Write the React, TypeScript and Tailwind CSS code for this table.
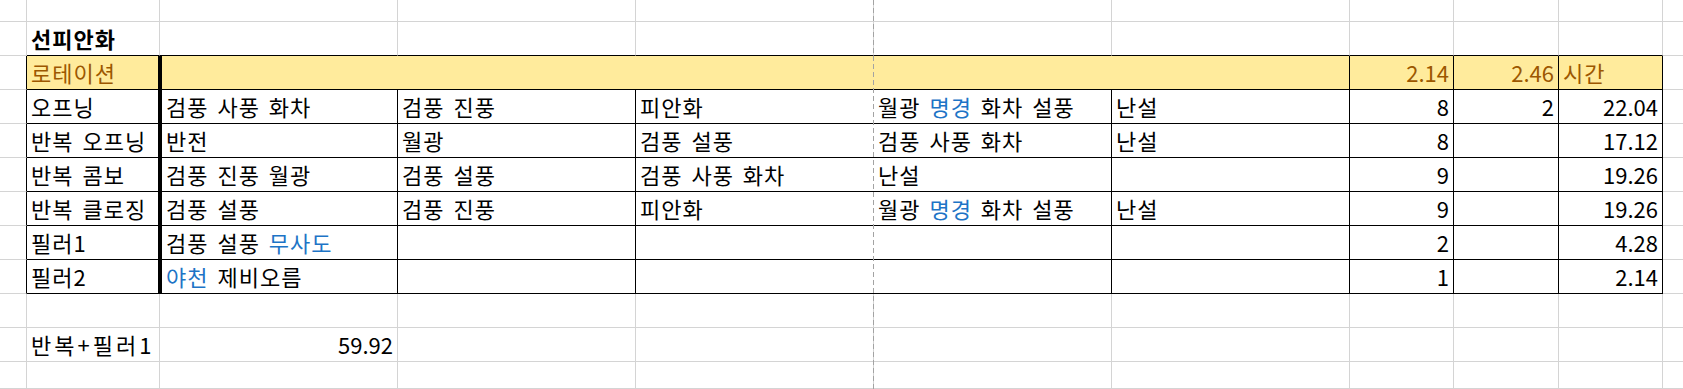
import type { ReactNode } from 'react';

const GRAY = 'border-r border-b border-[#d4d4d4]';
const EDGE = 'border-r border-r-[#d4d4d4] border-b border-b-black';
const LEFT = 'border-r border-r-black border-b border-b-[#d4d4d4]';
const TBL = 'border-r border-b border-black';
const TBL_A = 'border-r-2 border-b border-black';
const TBL_B = 'border-l-2 border-r border-b border-black';
const TBL_D = 'border-b border-black';
const TAIL = 'border-b border-[#d4d4d4]';
const NUM = 'text-right tracking-normal';

function Cell({ children, cls = '' }: { children?: ReactNode; cls?: string }) {
    return (
        <div className={`overflow-visible whitespace-nowrap px-[4px] leading-[33px] ${cls}`}>
            {children}
        </div>
    );
}

function Blue({ children }: { children: ReactNode }) {
    return <span className="text-[#1d74c6]">{children}</span>;
}

type Val = ReactNode;

// one table row: label, five skill columns, two counts, total
function DataRow({ cols }: { cols: Val[] }) {
    const [a, b, c, d, e, f, g, h, i] = cols;
    return (
        <>
            <Cell cls={LEFT} />
            <Cell cls={TBL_A}>{a}</Cell>
            <Cell cls={TBL_B}>{b}</Cell>
            <Cell cls={TBL}>{c}</Cell>
            <Cell cls={TBL_D}>{d}</Cell>
            <Cell cls={TBL}>{e}</Cell>
            <Cell cls={TBL}>{f}</Cell>
            <Cell cls={`${TBL} ${NUM}`}>{g}</Cell>
            <Cell cls={`${TBL} ${NUM}`}>{h}</Cell>
            <Cell cls={`${TBL} ${NUM}`}>{i}</Cell>
            <Cell cls={TAIL} />
        </>
    );
}

function EmptyRow({ edge = false }: { edge?: boolean }) {
    return (
        <>
            <Cell cls={GRAY} />
            {Array.from({ length: 9 }).map((_, k) => (
                <Cell key={k} cls={edge ? EDGE : GRAY} />
            ))}
            <Cell cls={TAIL} />
        </>
    );
}

export default function App() {
    const rows: Val[][] = [
        ['오프닝', '검풍 사풍 화차', '검풍 진풍', '피안화', <>월광 <Blue>명경</Blue> 화차 설풍</>, '난설', '8', '2', '22.04'],
        ['반복 오프닝', '반전', '월광', '검풍 설풍', '검풍 사풍 화차', '난설', '8', '', '17.12'],
        ['반복 콤보', '검풍 진풍 월광', '검풍 설풍', '검풍 사풍 화차', '난설', '', '9', '', '19.26'],
        ['반복 클로징', '검풍 설풍', '검풍 진풍', '피안화', <>월광 <Blue>명경</Blue> 화차 설풍</>, '난설', '9', '', '19.26'],
        ['필러1', <>검풍 설풍 <Blue>무사도</Blue></>, '', '', '', '', '2', '', '4.28'],
        ['필러2', <><Blue>야천</Blue> 제비오름</>, '', '', '', '', '1', '', '2.14'],
    ];

    return (
        <div className="relative h-[389px] w-[1683px] overflow-hidden bg-white text-[22px] text-black tracking-[1px] [word-spacing:3px] font-['Noto_Sans_CJK_KR','Noto_Sans',sans-serif]">
            <div className="grid grid-cols-[27px_133px_238px_238px_238px_238px_238px_104px_105px_104px_20px] grid-rows-[22px_repeat(10,34px)_27px]">
                <EmptyRow />

                {/* title row */}
                <Cell cls={GRAY} />
                <Cell cls={`${EDGE} font-bold`}>선피안화</Cell>
                {Array.from({ length: 8 }).map((_, k) => (
                    <Cell key={k} cls={EDGE} />
                ))}
                <Cell cls={TAIL} />

                {/* header row */}
                <Cell cls={LEFT} />
                <Cell cls={`${TBL_A} bg-[#ffeb9c] text-[#9c5700]`}>로테이션</Cell>
                <Cell cls={`${TBL_B} col-span-5 bg-[#ffeb9c]`} />
                <Cell cls={`${TBL} ${NUM} bg-[#ffeb9c] text-[#9c5700]`}>2.14</Cell>
                <Cell cls={`${TBL} ${NUM} bg-[#ffeb9c] text-[#9c5700]`}>2.46</Cell>
                <Cell cls={`${TBL} bg-[#ffeb9c] text-[#9c5700]`}>시간</Cell>
                <Cell cls={TAIL} />

                {rows.map((r, k) => (
                    <DataRow key={k} cols={r} />
                ))}

                <EmptyRow />

                {/* sum row */}
                <Cell cls={GRAY} />
                <Cell cls={`${GRAY} tracking-[3px]`}>반복+필러1</Cell>
                <Cell cls={`${GRAY} ${NUM}`}>59.92</Cell>
                {Array.from({ length: 7 }).map((_, k) => (
                    <Cell key={k} cls={GRAY} />
                ))}
                <Cell cls={TAIL} />

                <EmptyRow />
            </div>

            {/* page break marker */}
            <div className="absolute top-0 left-[873px] h-full w-px bg-[repeating-linear-gradient(to_bottom,#a3a3a3_0_5px,transparent_5px_8px)]" />
        </div>
    );
}
